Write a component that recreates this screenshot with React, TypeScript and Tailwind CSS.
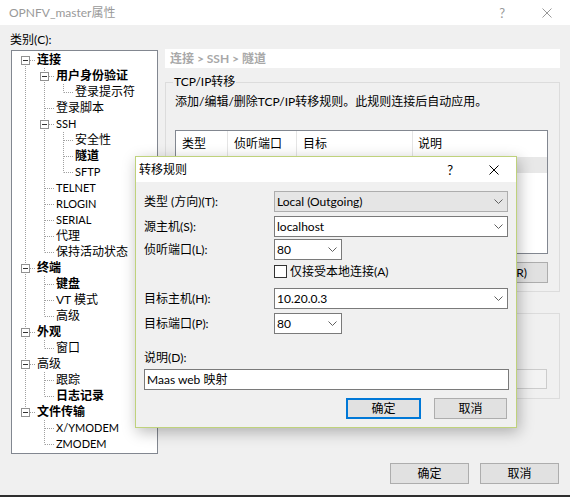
import React from "react";

// Xshell-style session properties window with the port-forward rule dialog on top.
type Node = { t: string; l: number; b?: boolean; exp?: boolean };

const TREE: Node[] = [
  { t: "连接", l: 0, b: true, exp: true },
  { t: "用户身份验证", l: 1, b: true, exp: true },
  { t: "登录提示符", l: 2 },
  { t: "登录脚本", l: 1 },
  { t: "SSH", l: 1, exp: true },
  { t: "安全性", l: 2 },
  { t: "隧道", l: 2, b: true },
  { t: "SFTP", l: 2 },
  { t: "TELNET", l: 1 },
  { t: "RLOGIN", l: 1 },
  { t: "SERIAL", l: 1 },
  { t: "代理", l: 1 },
  { t: "保持活动状态", l: 1 },
  { t: "终端", l: 0, b: true, exp: true },
  { t: "键盘", l: 1, b: true },
  { t: "VT 模式", l: 1 },
  { t: "高级", l: 1 },
  { t: "外观", l: 0, b: true, exp: true },
  { t: "窗口", l: 1 },
  { t: "高级", l: 0, exp: true },
  { t: "跟踪", l: 1 },
  { t: "日志记录", l: 1, b: true },
  { t: "文件传输", l: 0, b: true, exp: true },
  { t: "X/YMODEM", l: 1 },
  { t: "ZMODEM", l: 1 },
];

function hasNext(i: number, level: number) {
  for (let j = i + 1; j < TREE.length; j++) {
    if (TREE[j].l < level) return false;
    if (TREE[j].l === level) return true;
  }
  return false;
}

const DOT = "#a0a0a0";

function Cell({ kind, box, first }: { kind: "none" | "pipe" | "tee" | "elbow"; box?: boolean; first?: boolean }) {
  const top = first ? 8 : 0;
  return (
    <svg width="19" height="16" className="block shrink-0">
      {kind === "pipe" && <line x1="9.5" y1="0" x2="9.5" y2="16" stroke={DOT} strokeDasharray="1 1" />}
      {kind === "tee" && <line x1="9.5" y1={top} x2="9.5" y2="16" stroke={DOT} strokeDasharray="1 1" />}
      {kind === "elbow" && <line x1="9.5" y1={top} x2="9.5" y2="8.5" stroke={DOT} strokeDasharray="1 1" />}
      {(kind === "tee" || kind === "elbow") && (
        <line x1="10" y1="8.5" x2="19" y2="8.5" stroke={DOT} strokeDasharray="1 1" />
      )}
      {box && (
        <g>
          <rect x="5.5" y="4.5" width="8" height="8" fill="#fff" stroke="#919191" />
          <line x1="7" y1="8.5" x2="12" y2="8.5" stroke="#333" />
        </g>
      )}
    </svg>
  );
}

function Tree() {
  return (
    <div className="ml-[1px] mt-[2px] h-[404px] w-[147px] overflow-hidden border border-[#828790] bg-white pl-[4px] pt-[1px]">
      {TREE.map((n, i) => {
        const cells = [];
        for (let k = 0; k < n.l; k++) {
          cells.push(<Cell key={k} kind={hasNext(i, k) ? "pipe" : "none"} />);
        }
        cells.push(
          <Cell key="own" kind={hasNext(i, n.l) ? "tee" : "elbow"} box={n.exp} first={i === 0} />
        );
        const latin = /^[A-Z/]+$/.test(n.t);
        return (
          <div key={i} className="flex h-[16px] items-center">
            {cells}
            <span
              className={`ml-[2px] whitespace-nowrap leading-[16px] ${n.b ? "font-bold" : ""} ${
                latin ? "text-[11px]" : ""
              }`}
            >
              {n.t}
            </span>
          </div>
        );
      })}
    </div>
  );
}

function CloseIcon({ color }: { color: string }) {
  return (
    <svg width="10" height="10" viewBox="0 0 10 10" className="block shrink-0">
      <path d="M0.5 0.5L9.5 9.5M9.5 0.5L0.5 9.5" stroke={color} strokeWidth="1" fill="none" />
    </svg>
  );
}

function Chevron() {
  return (
    <svg width="9" height="5" viewBox="0 0 9 5" className="block shrink-0">
      <path d="M0.5 0.5L4.5 4.5L8.5 0.5" stroke="#606060" strokeWidth="1" fill="none" />
    </svg>
  );
}

function Combo({ w, value, gray }: { w: string; value: string; gray?: boolean }) {
  return (
    <div
      className={`flex h-[21px] items-center border pl-[2px] pr-[4px] ${w} ${
        gray ? "border-[#adadad] bg-[#e5e5e5]" : "border-[#7a7a7a] bg-white"
      }`}
    >
      <span className="flex-1 truncate">{value}</span>
      <Chevron />
    </div>
  );
}

function Row({ mt, label, children }: { mt: string; label: string; children: React.ReactNode }) {
  return (
    <div className={`flex items-center ${mt}`}>
      <span className="w-[130px] shrink-0">{label}</span>
      {children}
    </div>
  );
}

function Btn({ w, children, primary }: { w: string; children?: React.ReactNode; primary?: boolean }) {
  return (
    <div
      className={`flex h-[21px] items-center justify-center bg-[#e1e1e1] ${w} ${
        primary ? "border-2 border-[#0078d7]" : "border border-[#adadad]"
      }`}
    >
      {children}
    </div>
  );
}

function HeaderCell({ w, children }: { w: string; children: React.ReactNode }) {
  return <div className={`flex h-full items-center border-r border-[#e5e5e5] pl-[6px] ${w}`}>{children}</div>;
}

function RuleList() {
  return (
    <div className="mt-[20px] h-[124px] border border-[#828790] bg-white">
      <div className="flex h-[26px]">
        <HeaderCell w="w-[52px]">类型</HeaderCell>
        <HeaderCell w="w-[69px]">侦听端口</HeaderCell>
        <HeaderCell w="w-[116px]">目标</HeaderCell>
        <div className="flex h-full items-center pl-[5px]">说明</div>
      </div>
      {/* selected rule row, its text sits under the dialog */}
      <div className="h-[16px] bg-[#e8e8e8]" />
    </div>
  );
}

function RuleDialog() {
  return (
    <div className="absolute left-[135px] top-[156px] flex h-[272px] w-[382px] flex-col border border-[#bfd27c] bg-[#f0f0f0] shadow-[2px_4px_14px_rgba(0,0,0,0.28)]">
      <div className="flex h-[25px] shrink-0 items-center bg-white pl-[3px] pr-[17px]">
        <span>转移规则</span>
        <span className="ml-auto mr-[36px] text-[13px]">?</span>
        <CloseIcon color="#000" />
      </div>
      <div className="flex flex-col pl-[8px]">
        <Row mt="mt-[9px]" label="类型 (方向)(T):">
          <Combo w="w-[234px]" value="Local (Outgoing)" gray />
        </Row>
        <Row mt="mt-[4px]" label="源主机(S):">
          <Combo w="w-[234px]" value="localhost" />
        </Row>
        <Row mt="mt-[2px]" label="侦听端口(L):">
          <Combo w="w-[68px]" value="80" />
        </Row>
        <div className="mt-[4px] flex h-[15px] items-center gap-[3px] pl-[130px]">
          <span className="block h-[13px] w-[13px] shrink-0 border border-[#333333] bg-white" />
          <span className="whitespace-nowrap leading-[15px]">仅接受本地连接(A)</span>
        </div>
        <Row mt="mt-[9px]" label="目标主机(H):">
          <Combo w="w-[234px]" value="10.20.0.3" />
        </Row>
        <Row mt="mt-[4px]" label="目标端口(P):">
          <Combo w="w-[68px]" value="80" />
        </Row>
        <span className="mt-[16px]">说明(D):</span>
        <div className="mt-[3px] flex h-[21px] w-[365px] items-center border border-[#7a7a7a] bg-white pl-[2px]">
          Maas web 映射
        </div>
        <div className="mt-[8px] flex justify-end gap-[13px] pr-[9px]">
          <Btn w="w-[75px]" primary>
            确定
          </Btn>
          <Btn w="w-[73px]">取消</Btn>
        </div>
      </div>
    </div>
  );
}

export default function App() {
  return (
    <div className="relative flex h-[497px] w-[570px] flex-col overflow-hidden bg-[#f0f0f0] font-['Lato','Noto_Sans_CJK_SC',sans-serif] text-[12px] leading-[16px] text-black">
      {/* window title bar (inactive) */}
      <div className="flex h-[25px] shrink-0 items-center bg-white pl-[9px] pr-[18px] text-[#999999]">
        <span>OPNFV_master属性</span>
        <span className="ml-auto mr-[37px] text-[13px]">?</span>
        <CloseIcon color="#999999" />
      </div>

      <div className="flex flex-1 flex-col pl-[10px]">
        <div className="flex items-start">
          <div className="flex flex-col pt-[7px]">
            <span>类别(C):</span>
            <Tree />
          </div>

          <div className="ml-[7px] flex w-[395px] flex-col pt-[24px]">
            <div className="h-[19px] bg-white pl-[5px] font-bold leading-[19px] text-[#a8a8a8]">
              连接 &gt; SSH &gt; 隧道
            </div>

            <div className="mt-[14px] h-[210px] border border-[#dcdcdc] pl-[9px] pr-[11px]">
              <div className="-ml-[2px] -mt-[9px] w-fit bg-[#f0f0f0] px-[1px]">TCP/IP转移</div>
              <div className="mt-[4px] whitespace-nowrap">添加/编辑/删除TCP/IP转移规则。此规则连接后自动应用。</div>
              <RuleList />
              <div className="mt-[8px] flex justify-end gap-[8px]">
                <Btn w="w-[80px]" />
                <Btn w="w-[80px]" />
                <Btn w="w-[80px]">删除(R)</Btn>
              </div>
            </div>

            <div className="mt-[21px] h-[86px] border border-[#dcdcdc] pl-[9px] pr-[12px]">
              <div className="mt-[55px] ml-auto h-[20px] w-[200px] border border-[#cccccc] bg-[#f3f3f3]" />
            </div>
          </div>
        </div>

        <div className="mt-[9px] flex justify-end gap-[11px] pr-[11px]">
          <Btn w="w-[79px]">确定</Btn>
          <Btn w="w-[79px]">取消</Btn>
        </div>
      </div>

      <div className="h-[2px] shrink-0 bg-[#2e2e2e]" />

      <RuleDialog />
    </div>
  );
}
